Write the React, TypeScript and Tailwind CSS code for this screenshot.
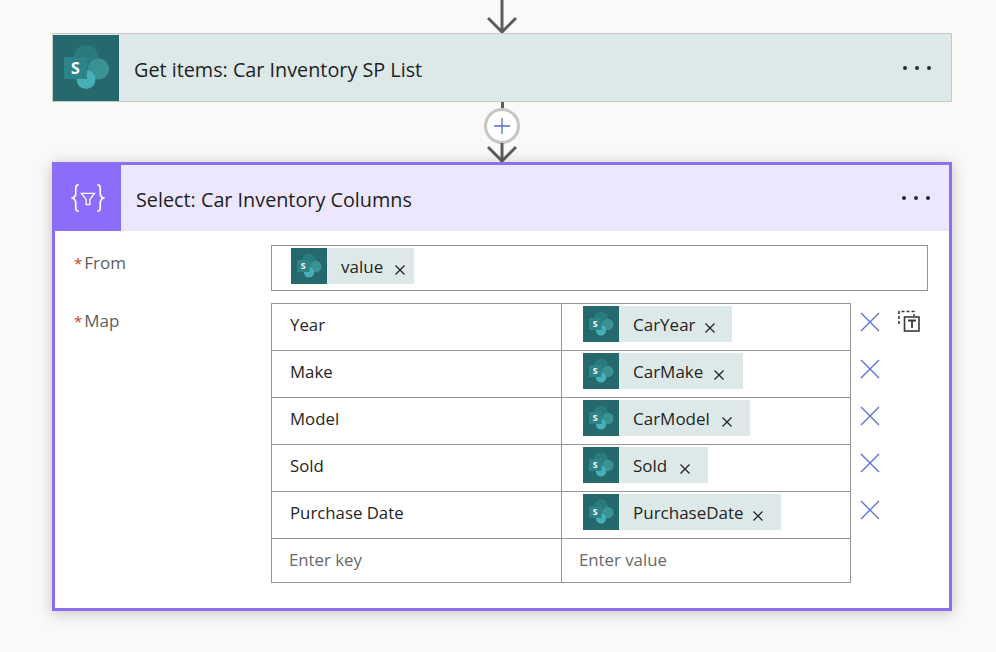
const font = "font-['Open_Sans','Noto_Sans',sans-serif]";

function SharePointIcon({ size }: { size: number }) {
    return (
        <svg width={size} height={size} viewBox="0 0 66 66" className="shrink-0 bg-[#26696c]">
            <circle cx="33" cy="22.500" r="12.500" fill="#2a7b7e" />
            <circle cx="45.500" cy="34" r="10.500" fill="#3a9295" />
            <circle cx="33" cy="44.500" r="9.500" fill="#45b0b8" />
            <rect x="11" y="22" width="23" height="22" rx="1" fill="#2d8488" />
            <text x="22.500" y="38.500" textAnchor="middle" fontSize="16" fontWeight="700" fill="#fff" fontFamily="Open Sans, sans-serif">S</text>
        </svg>
    );
}

function Dots() {
    return (
        <div className="ml-auto flex items-center gap-2">
            <span className="h-1 w-1 rounded-full bg-[#2b2b33]" />
            <span className="h-1 w-1 rounded-full bg-[#2b2b33]" />
            <span className="h-1 w-1 rounded-full bg-[#2b2b33]" />
        </div>
    );
}

function Arrow({ height, className }: { height: number; className?: string }) {
    return (
        <svg width="30" height={height} viewBox={`0 0 30 ${height}`} className={className}>
            <path d={`M15 0V${height - 2}M1 ${height - 15}L15 ${height - 1}L29 ${height - 15}`} fill="none" stroke="#5c5c5c" strokeWidth="3" />
        </svg>
    );
}

function Chip({ label, spacing }: { label: string; spacing: string }) {
    return (
        <div className="flex h-9 items-center bg-[#dde9e9]">
            <SharePointIcon size={36} />
            <span className="ml-[14px] pt-[2px] text-[17px] text-[#252423]">{label}</span>
            <svg width="10" height="10" viewBox="0 0 10 10" className={`mt-[8px] ${spacing}`}>
                <path d="M0.500 0.500L9.500 9.500M9.500 0.500L0.500 9.500" stroke="#252423" strokeWidth="1.300" />
            </svg>
        </div>
    );
}

function RemoveIcon() {
    return (
        <svg width="20" height="20" viewBox="0 0 20 20">
            <path d="M1 1L19 19M19 1L1 19" stroke="#5b6fd6" strokeWidth="1.300" />
        </svg>
    );
}

function TextModeIcon() {
    return (
        <svg width="22" height="22" viewBox="0 0 22 22">
            <path d="M1 14V1.500H16V6" fill="none" stroke="#3a3a3a" strokeWidth="1.600" strokeDasharray="3 2" />
            <rect x="6.500" y="7" width="14.500" height="14" fill="#fff" stroke="#3a3a3a" strokeWidth="1.600" />
            <path d="M10 10.500H18M14 10.500V18" fill="none" stroke="#3a3a3a" strokeWidth="1.800" />
        </svg>
    );
}

const rows = [
    { key: "Year", value: "CarYear", spacing: "ml-[9px] mr-[17px]" },
    { key: "Make", value: "CarMake", spacing: "ml-[11px] mr-[19px]" },
    { key: "Model", value: "CarModel", spacing: "ml-[12px] mr-[18px]" },
    { key: "Sold", value: "Sold", spacing: "ml-[13px] mr-[18px]" },
    { key: "Purchase Date", value: "PurchaseDate", spacing: "ml-[9px] mr-[18px]" },
];

function Label({ text }: { text: string }) {
    return (
        <div className="w-[216px] pl-[19px] text-[17px] text-[#605e5c]">
            <span className="mr-[2px] text-[15px] text-[#c8402f]">*</span>
            {text}
        </div>
    );
}

export default function App() {
    return (
        <div className={`flex h-[652px] w-[996px] flex-col overflow-hidden bg-[#faf9f8] pl-[52px] ${font}`}>
            <div className="flex h-[33px] w-[900px] justify-center">
                <Arrow height={33} />
            </div>

            <div className="flex h-[69px] w-[900px] items-center border border-[#c8c8c8] bg-[#dde8e8] pr-[20px]">
                <SharePointIcon size={66} />
                <span className="ml-[15px] pt-[4px] text-[19.8px] text-[#201f1e]">Get items: Car Inventory SP List</span>
                <Dots />
            </div>

            <div className="relative z-0 flex h-[60px] w-[900px] flex-col items-center">
                <div className="h-[6px] w-[3px] bg-[#5c5c5c]" />
                <div className="flex h-9 w-9 items-center justify-center rounded-full border-[3px] border-[#c8c6c4] bg-white">
                    <svg width="18" height="18" viewBox="0 0 18 18">
                        <path d="M9 1V17M1 9H17" stroke="#4f6bc9" strokeWidth="1.300" />
                    </svg>
                </div>
                <Arrow height={19} className="-mt-[1px]" />
            </div>

            <div className="z-10 h-[449px] w-[900px] border-[3px] border-[#8c6ff0] bg-white shadow-[0_2px_14px_rgba(0,0,0,0.22)]">
                <div className="flex h-[66px] items-center bg-[#ece6ff] pr-[19px]">
                    <div className="flex h-[66px] w-[66px] items-center justify-center bg-[#8c6cfa]">
                        <svg width="34" height="30" viewBox="0 0 36 32" fill="none" stroke="#fff" strokeWidth="1.800">
                            <path d="M8 2C4 2 5 6 5 10C5 14 4 15 1.500 16C4 17 5 18 5 22C5 26 4 30 8 30" />
                            <path d="M28 2C32 2 31 6 31 10C31 14 32 15 34.500 16C32 17 31 18 31 22C31 26 32 30 28 30" />
                            <path d="M11 11H25L20 17.500V23H16V17.500Z" strokeWidth="1.400" />
                        </svg>
                    </div>
                    <span className="ml-[15px] pt-[4px] text-[19.8px] text-[#201f1e]">Select: Car Inventory Columns</span>
                    <Dots />
                </div>

                <div className="flex pt-[14px]">
                    <div className="pt-[5px]">
                        <Label text="From" />
                    </div>
                    <div className="h-[46px] w-[657px] border border-[#979593] pt-[2px] pl-[19px]">
                        <div className="inline-flex">
                            <Chip label="value" spacing="ml-[12px] mr-[9px]" />
                        </div>
                    </div>
                </div>

                <div className="flex pt-3">
                    <div className="pt-[5px]">
                        <Label text="Map" />
                    </div>
                    <div className="w-[580px] border border-[#979593] text-[16.8px]">
                        {rows.map((row) => (
                            <div key={row.key} className="flex h-[47px] border-b border-[#979593]">
                                <div className="flex w-[290px] items-center border-r border-[#979593] pb-1 pl-[18px] text-[#252423]">
                                    {row.key}
                                </div>
                                <div className="pt-[2px] pl-[21px]">
                                    <Chip label={row.value} spacing={row.spacing} />
                                </div>
                            </div>
                        ))}
                        <div className="flex h-[43px] text-[#6a6867]">
                            <div className="flex w-[290px] items-center border-r border-[#979593] pb-[1px] pl-[17px]">Enter key</div>
                            <div className="flex items-center pb-[1px] pl-[17px]">Enter value</div>
                        </div>
                    </div>
                    <div className="ml-[9px] flex flex-col">
                        {rows.map((row, i) => (
                            <div key={row.key} className="flex h-[47px] items-center pb-[9px]">
                                <RemoveIcon />
                                {i === 0 && (
                                    <div className="-mt-[3px] ml-[18px]">
                                        <TextModeIcon />
                                    </div>
                                )}
                            </div>
                        ))}
                    </div>
                </div>
            </div>
        </div>
    );
}
